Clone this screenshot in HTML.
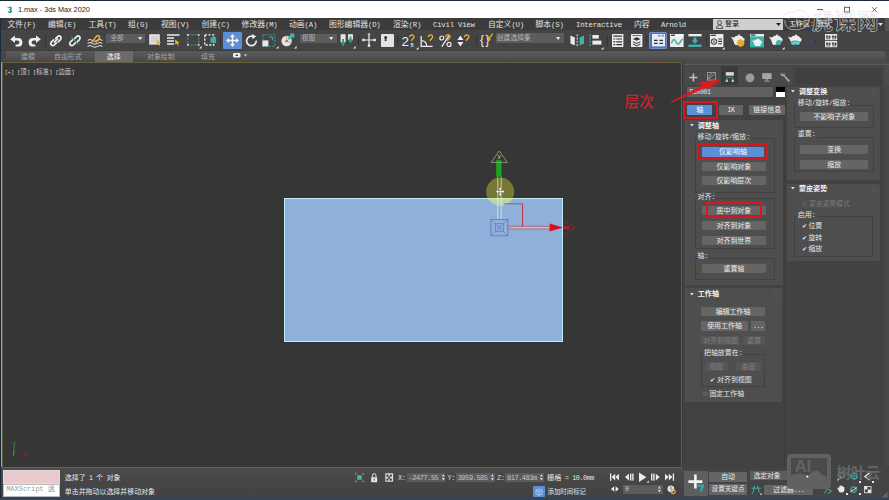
<!DOCTYPE html>
<html lang="zh-CN">
<head>
<meta charset="utf-8">
<title>1.max - 3ds Max 2020</title>
<style>
*{box-sizing:border-box;margin:0;padding:0}
html,body{width:889px;height:500px;overflow:hidden;background:#444}
body{position:relative;font-family:"Liberation Sans","Noto Sans CJK SC",sans-serif;font-size:6.95px;color:#e6e6e6}
#app{position:absolute;left:0;top:0;width:889px;height:500px;overflow:hidden;background:#444}
.t{position:absolute;white-space:nowrap}
.l{font-family:"Liberation Mono",monospace;font-size:0.94em;letter-spacing:-0.064em}
.m .l{letter-spacing:-0.032em}
.btn{position:absolute;background:#656565;color:#ececec;text-align:center;white-space:nowrap;overflow:hidden;border-radius:1px}
.btn.dis{background:#565656;color:#808080}
.btn.on{background:#5b8fd8;color:#fff}
.hd{font-weight:bold}
</style>
</head>
<body>
<div id="app">
<div style="position:absolute;left:0px;top:0px;width:889px;height:18.3px;background:#ffffff;border-top:1px solid #1a2736;"></div>
<svg style="position:absolute;left:6.6px;top:5.6px;overflow:visible;" width="5.6" height="7.6" viewBox="0 0 8 10"><path d="M1 1.2 L5 0.4 L7 2 L7 4.2 L5.6 5 L7.2 6.2 L7 8.6 L4.6 9.8 L1.4 8.6 L1.4 7 L4.4 7.6 L5 6.6 L3.2 5.4 L3.2 4.2 L5 3.4 L4.4 2.4 L1 2.8 Z" fill="#1c8f96"/><path d="M1 1.2 L5 0.4 L7 2 L5 3.4 L4.4 2.4 L1 2.8Z" fill="#39b7bd"/></svg>
<div class="t" style="left:18px;top:3.5px;line-height:12px;height:12px;font-family:'Liberation Sans',sans-serif;font-size:7.25px;color:#1e1e1e">1.max - 3ds Max 2020</div>
<svg style="position:absolute;left:817px;top:6px;overflow:visible;" width="62" height="8" viewBox="0 0 62 8"><path d="M0 3.5H6" stroke="#333" stroke-width="0.8" fill="none"/><rect x="27.6" y="1.2" width="5" height="4.8" stroke="#333" stroke-width="0.8" fill="none"/><path d="M55 1.2L60 6.2M60 1.2L55 6.2" stroke="#333" stroke-width="0.8" fill="none"/></svg>
<div style="position:absolute;left:0px;top:18.3px;width:889px;height:12.2px;background:#3b3b3b;"></div>
<div class="t m" style="left:7.5px;top:19px;font-size:7.8px;color:#e2e2e2;line-height:12px;height:12px;">文件<span class="l">(F)</span></div>
<div class="t m" style="left:48px;top:19px;font-size:7.8px;color:#e2e2e2;line-height:12px;height:12px;">编辑<span class="l">(E)</span></div>
<div class="t m" style="left:88.4px;top:19px;font-size:7.8px;color:#e2e2e2;line-height:12px;height:12px;">工具<span class="l">(T)</span></div>
<div class="t m" style="left:128px;top:19px;font-size:7.8px;color:#e2e2e2;line-height:12px;height:12px;">组<span class="l">(G)</span></div>
<div class="t m" style="left:161px;top:19px;font-size:7.8px;color:#e2e2e2;line-height:12px;height:12px;">视图<span class="l">(V)</span></div>
<div class="t m" style="left:201.5px;top:19px;font-size:7.8px;color:#e2e2e2;line-height:12px;height:12px;">创建<span class="l">(C)</span></div>
<div class="t m" style="left:241.6px;top:19px;font-size:7.8px;color:#e2e2e2;line-height:12px;height:12px;">修改器<span class="l">(M)</span></div>
<div class="t m" style="left:289px;top:19px;font-size:7.8px;color:#e2e2e2;line-height:12px;height:12px;">动画<span class="l">(A)</span></div>
<div class="t m" style="left:329px;top:19px;font-size:7.8px;color:#e2e2e2;line-height:12px;height:12px;">图形编辑器<span class="l">(D)</span></div>
<div class="t m" style="left:393px;top:19px;font-size:7.8px;color:#e2e2e2;line-height:12px;height:12px;">渲染<span class="l">(R)</span></div>
<div class="t m" style="left:433px;top:19px;font-size:7.8px;color:#e2e2e2;line-height:12px;height:12px;"><span class="l">Civil View</span></div>
<div class="t m" style="left:488px;top:19px;font-size:7.8px;color:#e2e2e2;line-height:12px;height:12px;">自定义<span class="l">(U)</span></div>
<div class="t m" style="left:535.5px;top:19px;font-size:7.8px;color:#e2e2e2;line-height:12px;height:12px;">脚本<span class="l">(S)</span></div>
<div class="t m" style="left:576px;top:19px;font-size:7.8px;color:#e2e2e2;line-height:12px;height:12px;"><span class="l">Interactive</span></div>
<div class="t m" style="left:634px;top:19px;font-size:7.8px;color:#e2e2e2;line-height:12px;height:12px;">内容</div>
<div class="t m" style="left:661px;top:19px;font-size:7.8px;color:#e2e2e2;line-height:12px;height:12px;"><span class="l">Arnold</span></div>
<div style="position:absolute;left:713px;top:18.6px;width:70px;height:11.6px;background:#cfcfcf;"></div>
<svg style="position:absolute;left:715.5px;top:20px;overflow:visible;" width="8" height="9" viewBox="0 0 8 9"><circle cx="3.6" cy="2.6" r="2" fill="none" stroke="#333" stroke-width="0.8"/><path d="M0.4 8.4 Q0.4 5 3.6 5 Q6.8 5 6.8 8.4Z" fill="none" stroke="#333" stroke-width="0.8"/></svg>
<div class="t" style="left:725px;top:18.4px;font-size:7px;color:#111;line-height:12px;height:12px;">登录</div>
<svg style="position:absolute;left:775.5px;top:23px;overflow:visible;" width="5" height="4" viewBox="0 0 5 4"><path d="M0 0H5L2.5 3Z" fill="#222"/></svg>
<div style="position:absolute;left:783px;top:18px;width:106px;height:12.5px;background:#3d3d3d;"></div>
<div style="position:absolute;left:885px;top:18px;width:4px;height:12.5px;background:#555;"></div>
<div class="t" style="left:789px;top:18.4px;font-size:7px;color:#eee;line-height:12px;height:12px;">工作区<span class="l">: </span>默认</div>
<svg style="position:absolute;left:878px;top:23px;overflow:visible;" width="5" height="4" viewBox="0 0 5 4"><path d="M0 0H5L2.5 3Z" fill="#ddd"/></svg>
<div style="position:absolute;left:0px;top:30.5px;width:889px;height:19.5px;background:#444444;"></div>
<svg style="position:absolute;left:9.6px;top:34.6px;overflow:visible;" width="13" height="12" viewBox="0 0 13 12"><path d="M5 0.4L0.2 4.2L5 8V5.6H7.4Q9.4 5.6 9.4 7.6Q9.4 9.4 7.4 9.4H5.6V11.6H7.8Q12.4 11.6 12.4 7.4Q12.4 3 7.8 3H5Z" fill="#eeeeee"/></svg>
<svg style="position:absolute;left:27.6px;top:34.6px;overflow:visible;" width="13" height="12" viewBox="0 0 13 12"><path d="M8 0.4L12.8 4.2L8 8V5.6H5.6Q3.6 5.6 3.6 7.6Q3.6 9.4 5.6 9.4H7.4V11.6H5.2Q0.6 11.6 0.6 7.4Q0.6 3 5.2 3H8Z" fill="#eeeeee"/></svg>
<div style="position:absolute;left:45px;top:35px;width:0.8px;height:11px;background:#333333;"></div>
<svg style="position:absolute;left:48.4px;top:32.6px;overflow:visible;" width="16" height="15" viewBox="0 0 16 15"><g fill="none" stroke="#eeeeee" stroke-width="1.7" stroke-linecap="round"><path d="M5.6 6.8L3.4 9Q2 10.6 3.4 12Q4.8 13.2 6.4 11.8L8.4 9.8"/><path d="M7.6 5.6L9.6 3.6Q11.2 2.2 12.6 3.6Q13.8 5 12.4 6.6L10.2 8.8"/><path d="M6.4 9.2L9.6 6"/></g></svg>
<svg style="position:absolute;left:66.8px;top:32.6px;overflow:visible;" width="16" height="15" viewBox="0 0 16 15"><g fill="none" stroke="#eeeeee" stroke-width="1.7" stroke-linecap="round"><path d="M5.6 6.8L3.4 9Q2 10.6 3.4 12Q4.8 13.2 6.4 11.8L8.4 9.8"/><path d="M7.6 5.6L9.6 3.6Q11.2 2.2 12.6 3.6Q13.8 5 12.4 6.6L10.2 8.8"/></g><path d="M4.4 4L11.6 11.4" stroke="#3fb3ab" stroke-width="1" /></svg>
<svg style="position:absolute;left:86.6px;top:33.6px;overflow:visible;" width="17" height="14" viewBox="0 0 17 14"><path d="M0.6 6.4Q3 4.6 5.4 6.4T10.4 6.4T15.4 6.4M0.6 9.4Q3 7.6 5.4 9.4T10.4 9.4T15.4 9.4M0.6 12.4Q3 10.6 5.4 12.4T10.4 12.4T15.4 12.4" stroke="#eeeeee" stroke-width="1" fill="none"/><path d="M4.6 8.6L8.6 3.4Q10.2 0.8 12 1.8Q13.4 3 11.8 5L8.6 8.4" stroke="#e8b030" stroke-width="1.5" fill="none"/></svg>
<div style="position:absolute;left:105.6px;top:33.6px;width:39.6px;height:9.4px;background:#5c5c5c;"></div>
<div class="t" style="left:110.4px;top:32.4px;font-size:6.6px;color:#b4b4b4;line-height:12px;height:12px;">全部</div>
<svg style="position:absolute;left:137.6px;top:36.8px;overflow:visible;" width="4.4" height="3.4" viewBox="0 0 4.4 3.4"><path d="M0 0H4.4L2.2 3Z" fill="#e0e0e0"/></svg>
<svg style="position:absolute;left:149px;top:34px;overflow:visible;" width="14" height="12" viewBox="0 0 14 12"><rect x="0.2" y="0.2" width="10.6" height="10.4" fill="#e4e4e4"/><rect x="2" y="2" width="7" height="6.8" fill="#d8d0d4"/><g transform="translate(7.4,5.4)"><path d="M0 0L4.6 3.4L2.8 3.8L3.8 6L2.8 6.4L1.8 4.2L0.4 5.4Z" fill="#e8b030"/></g></svg>
<svg style="position:absolute;left:167px;top:34px;overflow:visible;" width="14" height="12" viewBox="0 0 14 12"><path d="M0 1H12.6M0 4H7M0 7H7M0 10H7" stroke="#ececec" stroke-width="1.6"/><g transform="translate(8,5.4)"><path d="M0 0L4.6 3.4L2.8 3.8L3.8 6L2.8 6.4L1.8 4.2L0.4 5.4Z" fill="#e8b030"/></g></svg>
<svg style="position:absolute;left:186.6px;top:34px;overflow:visible;" width="13" height="12" viewBox="0 0 13 12"><rect x="0.8" y="0.8" width="11" height="10.2" fill="none" stroke="#4f9c94" stroke-width="1.1" stroke-dasharray="2 1.4"/><path d="M0.2 0.8H2M0.8 0.2V2M10.6 0.8H12.4M11.8 0.2V2M0.2 11H2M0.8 9.8V11.6M10.6 11H12.4M11.8 9.8V11.6" stroke="#cfe6e2" stroke-width="1"/></svg>
<svg style="position:absolute;left:198.6px;top:46.4px;overflow:visible;" width="2.6" height="2.6" viewBox="0 0 2.6 2.6"><path d="M2.6 0V2.6H0Z" fill="#e6e6e6"/></svg>
<svg style="position:absolute;left:203.8px;top:34px;overflow:visible;" width="12.6" height="12" viewBox="0 0 12.6 12"><rect x="0.8" y="0.8" width="9" height="10.2" fill="none" stroke="#ececec" stroke-width="1.3" stroke-dasharray="2.2 1.4"/><rect x="6.6" y="3.2" width="5.4" height="5.6" fill="#3fb3ab"/></svg>
<div style="position:absolute;left:219.6px;top:35px;width:0.8px;height:11px;background:#333333;"></div>
<div style="position:absolute;left:223.4px;top:32.2px;width:18.2px;height:17px;background:#5b8fd8;border-radius:1px;"></div>
<svg style="position:absolute;left:226px;top:34.2px;overflow:visible;" width="13" height="13" viewBox="0 0 13 13"><path d="M6.5 0L9 3H7.3V5.7H10V4L13 6.5L10 9V7.3H7.3V10H9L6.5 13L4 10H5.7V7.3H3V9L0 6.5L3 4V5.7H5.7V3H4Z" fill="#f4f4f4"/></svg>
<svg style="position:absolute;left:244.8px;top:33.6px;overflow:visible;" width="13" height="13" viewBox="0 0 13 13"><path d="M8.6 2.6A4.8 4.8 0 1 0 11.2 6.6" stroke="#eeeeee" stroke-width="1.7" fill="none"/><path d="M7 0L11.2 2.4L7.6 5.2Z" fill="#eeeeee"/></svg>
<svg style="position:absolute;left:262.4px;top:33.8px;overflow:visible;" width="14" height="13" viewBox="0 0 14 13"><rect x="0.8" y="0.8" width="12" height="11.4" fill="none" stroke="#3a968c" stroke-width="1.1" stroke-dasharray="2.2 1.2"/><rect x="0.4" y="6.4" width="6" height="6" fill="#e8e8e8"/><path d="M7 3H10.4V6.4" stroke="#3fb3ab" stroke-width="1" fill="none"/></svg>
<svg style="position:absolute;left:275.6px;top:46.4px;overflow:visible;" width="2.6" height="2.6" viewBox="0 0 2.6 2.6"><path d="M2.6 0V2.6H0Z" fill="#e6e6e6"/></svg>
<svg style="position:absolute;left:281px;top:33.4px;overflow:visible;" width="15" height="14" viewBox="0 0 15 14"><circle cx="5.6" cy="8" r="5.2" fill="#e4e4e4"/><path d="M5.6 8L5.6 3M5.6 8L10 10" stroke="#999" stroke-width="0.7"/><circle cx="5.6" cy="8" r="1.3" fill="#d06020"/><path d="M7.4 6.2L10.6 2.2" stroke="#3fb3ab" stroke-width="2.2"/><circle cx="11.2" cy="2.6" r="2.4" fill="#3fb3ab"/></svg>
<svg style="position:absolute;left:294.4px;top:46.4px;overflow:visible;" width="2.6" height="2.6" viewBox="0 0 2.6 2.6"><path d="M2.6 0V2.6H0Z" fill="#e6e6e6"/></svg>
<div style="position:absolute;left:300px;top:33.6px;width:36.6px;height:9.4px;background:#5c5c5c;"></div>
<div class="t" style="left:301.8px;top:32.4px;font-size:6.6px;color:#b4b4b4;line-height:12px;height:12px;">视图</div>
<svg style="position:absolute;left:329px;top:36.8px;overflow:visible;" width="4.4" height="3.4" viewBox="0 0 4.4 3.4"><path d="M0 0H4.4L2.2 3Z" fill="#e0e0e0"/></svg>
<svg style="position:absolute;left:339.6px;top:34px;overflow:visible;" width="15" height="13" viewBox="0 0 15 13"><rect x="0.6" y="0.2" width="5" height="8" fill="#e4e4e4"/><rect x="8" y="0.2" width="5" height="6" fill="#e4e4e4"/><path d="M3.1 12.6L0.4 8.2H2.2V5H4V8.2H5.8Z" fill="#2f9a74"/><path d="M10.5 9.6L7.8 5.4H9.6V2.4H11.4V5.4H13.2Z" fill="#2f9a74"/></svg>
<svg style="position:absolute;left:353px;top:46.4px;overflow:visible;" width="2.6" height="2.6" viewBox="0 0 2.6 2.6"><path d="M2.6 0V2.6H0Z" fill="#e6e6e6"/></svg>
<div style="position:absolute;left:357.6px;top:35px;width:0.8px;height:11px;background:#333333;"></div>
<svg style="position:absolute;left:361.8px;top:33.4px;overflow:visible;" width="14" height="14" viewBox="0 0 14 14"><path d="M7 1.6V12.4M1.6 7H12.4" stroke="#eeeeee" stroke-width="1.2"/><rect x="5.8" y="0.2" width="2.4" height="2.4" fill="#8fd0ca"/><rect x="5.8" y="11.4" width="2.4" height="2.4" fill="#eeeeee"/><rect x="0.2" y="5.8" width="2.4" height="2.4" fill="#eeeeee"/><rect x="11.4" y="5.8" width="2.4" height="2.4" fill="#eeeeee"/></svg>
<svg style="position:absolute;left:380.6px;top:34.2px;overflow:visible;" width="13" height="13" viewBox="0 0 13 13"><rect x="0" y="0" width="13" height="13" rx="0.8" fill="#e2e2e2"/><circle cx="4.6" cy="3.6" r="1.5" fill="#333"/><path d="M4 4.4H5.2L5.6 7H3.6Z" fill="#333"/></svg>
<div style="position:absolute;left:397.2px;top:35px;width:0.8px;height:11px;background:#333333;"></div>
<svg style="position:absolute;left:401.8px;top:33.6px;overflow:visible;" width="15" height="14" viewBox="0 0 15 14"><text x="-0.4" y="12.4" font-family="Liberation Sans,sans-serif" font-size="13.4" fill="#eeeeee">2</text><text x="8.4" y="13" font-family="Liberation Sans,sans-serif" font-size="5.6" font-weight="bold" fill="#eeeeee">5</text><path d="M7.6 3.2Q8 0.8 10.2 0.8Q12.6 1.2 11.8 3.8L9.2 6.8" stroke="#e8b030" stroke-width="1.3" fill="none"/></svg>
<svg style="position:absolute;left:415.6px;top:46.6px;overflow:visible;" width="2.6" height="2.6" viewBox="0 0 2.6 2.6"><path d="M2.6 0V2.6H0Z" fill="#e6e6e6"/></svg>
<svg style="position:absolute;left:420.4px;top:33.6px;overflow:visible;" width="15" height="14" viewBox="0 0 15 14"><path d="M1.2 2V12.4H12.6" stroke="#eeeeee" stroke-width="1.3" fill="none"/><path d="M1.2 6.6Q6.4 6.6 6.8 12.4" stroke="#eeeeee" stroke-width="1.1" fill="none"/><path d="M8.2 3.2Q8.6 0.8 10.8 0.8Q13.2 1.2 12.4 3.8L9.8 6.8" stroke="#e8b030" stroke-width="1.3" fill="none"/></svg>
<svg style="position:absolute;left:439.4px;top:33.6px;overflow:visible;" width="14" height="14" viewBox="0 0 14 14"><circle cx="2.8" cy="4" r="2" fill="none" stroke="#eeeeee" stroke-width="1.2"/><circle cx="10" cy="10.4" r="2" fill="none" stroke="#eeeeee" stroke-width="1.2"/><path d="M10 1.6L2.8 12.6" stroke="#eeeeee" stroke-width="1.2"/><path d="M6.6 3Q7 0.6 9.2 0.6Q11.6 1 10.8 3.6L8.2 6.6" stroke="#e8b030" stroke-width="1.3" fill="none"/></svg>
<svg style="position:absolute;left:457.4px;top:33.6px;overflow:visible;" width="14" height="14" viewBox="0 0 14 14"><path d="M0.4 6L3.4 1.6L6.4 6ZM0.4 8L3.4 12.4L6.4 8Z" fill="#eeeeee"/><path d="M7.4 3.2Q7.8 0.8 10 0.8Q12.4 1.2 11.6 3.8L9 6.8" stroke="#e8b030" stroke-width="1.3" fill="none"/></svg>
<div style="position:absolute;left:476px;top:35px;width:0.8px;height:11px;background:#333333;"></div>
<svg style="position:absolute;left:479.6px;top:33.2px;overflow:visible;" width="14" height="14" viewBox="0 0 14 14"><text x="0" y="11.4" font-family="Liberation Sans,sans-serif" font-size="12" fill="#eeeeee">{</text><text x="5.4" y="11.4" font-family="Liberation Sans,sans-serif" font-size="12" fill="#eeeeee">}</text><path d="M6.2 1.6L10.4 6.8M12.6 0.6L7.8 7.6" stroke="#e8b030" stroke-width="1.3"/></svg>
<div style="position:absolute;left:495.6px;top:33.2px;width:68.8px;height:9.4px;background:#5c5c5c;"></div>
<div class="t" style="left:496.8px;top:32px;font-size:6.8px;color:#b4b4b4;line-height:12px;height:12px;">创建选择集</div>
<svg style="position:absolute;left:556.2px;top:36.6px;overflow:visible;" width="4.4" height="3.4" viewBox="0 0 4.4 3.4"><path d="M0 0H4.4L2.2 3Z" fill="#e0e0e0"/></svg>
<svg style="position:absolute;left:570.4px;top:34px;overflow:visible;" width="15" height="13" viewBox="0 0 15 13"><path d="M0.4 1.4L4.8 3.4V11.4L0.4 9.4Z" fill="#e8e8e8"/><path d="M14 1.4L9.6 3.4V11.4L14 9.4Z" fill="#3fb3ab"/><path d="M7.2 0.4V12.6" stroke="#e8e8e8" stroke-width="1" stroke-dasharray="2 1.2"/></svg>
<svg style="position:absolute;left:588.6px;top:34px;overflow:visible;" width="13" height="13" viewBox="0 0 13 13"><path d="M1 0.4V12.6" stroke="#3fb3ab" stroke-width="1" stroke-dasharray="2 1.2"/><rect x="3.4" y="1" width="6.4" height="3.6" fill="#ececec"/><rect x="3.4" y="6.6" width="9" height="4" fill="#ececec"/></svg>
<svg style="position:absolute;left:601.4px;top:46.6px;overflow:visible;" width="2.6" height="2.6" viewBox="0 0 2.6 2.6"><path d="M2.6 0V2.6H0Z" fill="#e6e6e6"/></svg>
<div style="position:absolute;left:606.8px;top:35px;width:0.8px;height:11px;background:#333333;"></div>
<svg style="position:absolute;left:612px;top:34.2px;overflow:visible;" width="11.4" height="13" viewBox="0 0 11.4 13"><rect x="0" y="0" width="11.4" height="13" rx="0.6" fill="#ececec"/><path d="M1.4 2.2H10M1.4 5H10M1.4 7.8H10M1.4 10.6H10" stroke="#333" stroke-width="1.2"/><path d="M3.8 3V12" stroke="#ececec" stroke-width="1"/></svg>
<svg style="position:absolute;left:630.6px;top:34.2px;overflow:visible;" width="11.4" height="13" viewBox="0 0 11.4 13"><rect x="0" y="0" width="11.4" height="13" rx="0.6" fill="#ececec"/><path d="M1.4 1.6H10" stroke="#666" stroke-width="1"/><path d="M5.7 3.2L9.6 5L5.7 6.8L1.8 5ZM2 7.2L5.7 9L9.4 7.2V8.2L5.7 10L2 8.2ZM2 9.6L5.7 11.4L9.4 9.6V10.6L5.7 12.4L2 10.6Z" fill="#333"/></svg>
<div style="position:absolute;left:645.6px;top:35px;width:0.8px;height:11px;background:#333333;"></div>
<div style="position:absolute;left:648.6px;top:32.2px;width:18.8px;height:17px;background:#4f74b8;border:1px solid #6e8fca;border-radius:1.5px;"></div>
<svg style="position:absolute;left:651.8px;top:34.4px;overflow:visible;" width="13" height="12.4" viewBox="0 0 13 12.4"><rect x="0" y="0" width="13" height="12.4" fill="#e6ecf6"/><rect x="6" y="0.8" width="2.6" height="1.8" fill="#8a9cc0"/><rect x="9.4" y="0.8" width="2.6" height="1.8" fill="#8a9cc0"/><path d="M2 6.4H5.6M7.4 6.4H11M2 9.4H5.6M7.4 9.4H11" stroke="#333" stroke-width="1.3"/></svg>
<svg style="position:absolute;left:670px;top:34.2px;overflow:visible;" width="13.6" height="13" viewBox="0 0 13.6 13"><rect x="0" y="0" width="13.6" height="13" fill="#ececec"/><rect x="0" y="0" width="13.6" height="2.6" fill="#f8f8f8"/><rect x="1" y="0.6" width="4" height="1.4" fill="#444"/><path d="M1.4 9.4Q3.4 3 5.6 7.4T9.6 9T12.4 5" stroke="#3fb3ab" stroke-width="1.5" fill="none"/></svg>
<svg style="position:absolute;left:688px;top:34px;overflow:visible;" width="14" height="13.4" viewBox="0 0 14 13.4"><rect x="0.4" y="0" width="13.2" height="2.4" fill="#ececec"/><path d="M5.6 3.4H8.4V6.4H10.4L7 9.8L3.6 6.4H5.6Z" fill="#3fb3ab"/><rect x="0.4" y="10.6" width="13.2" height="2.4" fill="#3fb3ab"/></svg>
<div style="position:absolute;left:706px;top:35px;width:0.8px;height:11px;background:#333333;"></div>
<svg style="position:absolute;left:710px;top:34.2px;overflow:visible;" width="13.4" height="13" viewBox="0 0 13.4 13"><rect x="0" y="0" width="13.4" height="13" fill="#ececec"/><rect x="0.8" y="0.6" width="5" height="1.4" fill="#444"/><circle cx="4" cy="7.6" r="2.8" fill="none" stroke="#333" stroke-width="1"/><path d="M2 5.6L6 9.6M6 5.6L2 9.6" stroke="#333" stroke-width="0.7"/><path d="M8.2 5H12M8.2 7.4H12M8.2 9.8H12" stroke="#333" stroke-width="1.1"/></svg>
<svg style="position:absolute;left:722.4px;top:46.6px;overflow:visible;" width="2.6" height="2.6" viewBox="0 0 2.6 2.6"><path d="M2.6 0V2.6H0Z" fill="#e6e6e6"/></svg>
<svg style="position:absolute;left:731.4px;top:33.8px;overflow:visible;" width="15" height="14" viewBox="0 0 15 14"><path d="M0 2.8L3 3.6Q4.6 1.6 7.2 1.6L7.2 0.6H8.8V1.6Q11.2 1.8 12.4 4Q14 4 13.6 6Q13.2 7.6 12.2 7.8Q11.6 10.4 10.4 11H4.6Q3 10 2.6 7.2Q1.4 5 0 2.8Z" fill="#ececec"/><circle cx="9.6" cy="9" r="3.4" fill="#e8b030"/><circle cx="9.6" cy="9" r="1.3" fill="#7a5a10"/><path d="M9.6 4.8V13.2M5.4 9H13.8M6.6 6L12.6 12M12.6 6L6.6 12" stroke="#e8b030" stroke-width="1"/></svg>
<svg style="position:absolute;left:750px;top:34px;overflow:visible;" width="14" height="13.4" viewBox="0 0 14 13.4"><rect x="0" y="0" width="14" height="13.4" fill="#3fb3ab"/><rect x="0" y="0" width="14" height="2.4" fill="#ececec"/><rect x="0.8" y="0.5" width="4.6" height="1.3" fill="#444"/><g transform="translate(2.2,4.2) scale(0.72)"><path d="M0 2.8L3 3.6Q4.6 1.6 7.2 1.6L7.2 0.6H8.8V1.6Q11.2 1.8 12.4 4Q14 4 13.6 6Q13.2 7.6 12.2 7.8Q11.6 10.4 10.4 11H4.6Q3 10 2.6 7.2Q1.4 5 0 2.8Z" fill="#f0f0f0"/></g></svg>
<svg style="position:absolute;left:768.6px;top:33.8px;overflow:visible;" width="15" height="14" viewBox="0 0 15 14"><path d="M0 2.8L3 3.6Q4.6 1.6 7.2 1.6L7.2 0.6H8.8V1.6Q11.2 1.8 12.4 4Q14 4 13.6 6Q13.2 7.6 12.2 7.8Q11.6 10.4 10.4 11H4.6Q3 10 2.6 7.2Q1.4 5 0 2.8Z" fill="#ececec"/><path d="M8 6.4Q10.6 5.4 12.8 7.2Q12 10.6 10.4 11H6.4Q6.6 8 8 6.4Z" fill="#3fb3ab"/></svg>
<svg style="position:absolute;left:782px;top:46.6px;overflow:visible;" width="2.6" height="2.6" viewBox="0 0 2.6 2.6"><path d="M2.6 0V2.6H0Z" fill="#e6e6e6"/></svg>
<svg style="position:absolute;left:787.6px;top:33.8px;overflow:visible;" width="15" height="14" viewBox="0 0 15 14"><path d="M0 2.8L3 3.6Q4.6 1.6 7.2 1.6L7.2 0.6H8.8V1.6Q11.2 1.8 12.4 4Q14 4 13.6 6Q13.2 7.6 12.2 7.8Q11.6 10.4 10.4 11H4.6Q3 10 2.6 7.2Q1.4 5 0 2.8Z" fill="#ececec"/><path d="M2.8 7.6Q7 5.4 12.2 7.8Q11.6 10.4 10.4 11H4.6Q3.2 10 2.8 7.6Z" fill="#3fb3ab"/><path d="M4.4 9.4Q7.4 7.6 10.8 9.4" stroke="#d8f0ee" stroke-width="0.8" fill="none"/></svg>
<svg style="position:absolute;left:808.8px;top:35px;overflow:visible;" width="9" height="11" viewBox="0 0 9 11"><path d="M0.6 10.6Q0.4 3.6 8.4 0.4Q3.6 4.4 3.4 10.4Z" fill="#3c4868"/><path d="M4.6 9.6Q4.8 5.4 8.4 2.8Q6.4 6 6.4 9.4Z" fill="#343c58"/></svg>
<svg style="position:absolute;left:824.6px;top:34.4px;overflow:visible;" width="6.2" height="6.2" viewBox="0 0 6.2 6.2"><rect x="0" y="0" width="6.2" height="6.2" fill="#e6e6e6"/><rect x="1" y="1.6" width="2" height="2" fill="#444"/><rect x="3.6" y="1.6" width="1.8" height="2.6" fill="#444"/><rect x="1" y="4.4" width="4" height="0.9" fill="#666"/></svg>
<svg style="position:absolute;left:824.6px;top:41.2px;overflow:visible;" width="6.2" height="6.2" viewBox="0 0 6.2 6.2"><rect x="0" y="0" width="6.2" height="6.2" fill="#e6e6e6"/><rect x="1" y="1.6" width="2" height="2" fill="#444"/><rect x="3.6" y="1.6" width="1.8" height="2.6" fill="#444"/><rect x="1" y="4.4" width="4" height="0.9" fill="#666"/></svg>
<svg style="position:absolute;left:831.4px;top:34.4px;overflow:visible;" width="6.2" height="6.2" viewBox="0 0 6.2 6.2"><rect x="0" y="0" width="6.2" height="6.2" fill="#e6e6e6"/><rect x="1" y="1.6" width="2" height="2" fill="#444"/><rect x="3.6" y="1.6" width="1.8" height="2.6" fill="#444"/><rect x="1" y="4.4" width="4" height="0.9" fill="#666"/></svg>
<svg style="position:absolute;left:831.4px;top:41.2px;overflow:visible;" width="6.2" height="6.2" viewBox="0 0 6.2 6.2"><rect x="0" y="0" width="6.2" height="6.2" fill="#e6e6e6"/><rect x="1" y="1.6" width="2" height="2" fill="#444"/><rect x="3.6" y="1.6" width="1.8" height="2.6" fill="#444"/><rect x="1" y="4.4" width="4" height="0.9" fill="#666"/></svg>
<div style="position:absolute;left:0px;top:49.6px;width:889px;height:13px;background:#474747;border-top:1px solid #3e3e3e;"></div>
<div style="position:absolute;left:6px;top:50.6px;width:879px;height:11.6px;background:linear-gradient(#5a5a5a,#545454 45%,#474747);"></div>
<div style="position:absolute;left:95px;top:51px;width:38px;height:11px;background:#6a6a6a;"></div>
<div class="t" style="left:21px;top:50.6px;font-size:6.9px;color:#a4a4a4;line-height:12px;height:12px;">建模</div>
<div class="t" style="left:54px;top:50.6px;font-size:6.9px;color:#a4a4a4;line-height:12px;height:12px;">自由形式</div>
<div class="t" style="left:106.8px;top:50.6px;font-size:6.9px;color:#f4f4f4;line-height:12px;height:12px;">选择</div>
<div class="t" style="left:147px;top:50.6px;font-size:6.9px;color:#a4a4a4;line-height:12px;height:12px;">对象绘制</div>
<div class="t" style="left:201px;top:50.6px;font-size:6.9px;color:#a4a4a4;line-height:12px;height:12px;">填充</div>
<svg style="position:absolute;left:232.5px;top:53.2px;overflow:visible;" width="16" height="5" viewBox="0 0 16 5"><rect x="0" y="0" width="7.5" height="4.6" rx="1.4" fill="#f0f0f0"/><rect x="2.6" y="1.6" width="2.4" height="1.4" fill="#444"/><path d="M11 1.4H14L12.5 3.4Z" fill="#ddd"/></svg>
<div style="position:absolute;left:0px;top:62.5px;width:889px;height:3px;background:#3a3a3a;"></div>
<div style="position:absolute;left:0px;top:62.5px;width:684px;height:405px;background:#383838;"></div>
<div style="position:absolute;left:2px;top:62.2px;width:680px;height:405.4px;background:#363636;border:1px solid #67603f;border-right-width:1.4px;border-top-width:1.3px;border-bottom:1.3px solid #6a6350;"></div>
<div class="t" style="left:4.4px;top:66.3px;font-size:6.3px;color:#d0d0d0;line-height:12px;height:12px;letter-spacing:0.1px;"><span class="l">[+] [</span>顶<span class="l">] [</span>标准<span class="l">] [</span>边面<span class="l">]</span></div>
<div style="position:absolute;left:283.6px;top:197.6px;width:279.4px;height:144px;background:#8fb0d8;border:1.3px solid #c0ecf6;box-shadow:0 0 0 0.9px #25393f;"></div>
<svg style="position:absolute;left:8px;top:438px;overflow:visible;" width="24" height="22" viewBox="0 0 24 22"><g opacity="0.6"><path d="M5.6 18L6.6 3" stroke="#3c9a3c" stroke-width="1.6" stroke-opacity="0.85"/><path d="M5.6 13V18" stroke="#8aa0c8" stroke-width="0.9"/><path d="M5.6 18.5V20" stroke="#3048a0" stroke-width="1.4"/><ellipse cx="17.4" cy="16.4" rx="2.6" ry="2" fill="#b02028" fill-opacity="0.8"/><path d="M6 17.6L15 16.6" stroke="#5a3030" stroke-width="0.8"/></g></svg>
<svg style="position:absolute;left:0px;top:0px;overflow:visible;" width="889" height="500" viewBox="0 0 889 500"><defs><linearGradient id="yg" gradientUnits="userSpaceOnUse" x1="0" y1="198" x2="0" y2="206"><stop offset="0" stop-color="#e0f07c" stop-opacity="0.72"/><stop offset="1" stop-color="#d8ec98" stop-opacity="0.4"/></linearGradient></defs><clipPath id="cu"><rect x="480" y="170" width="40" height="28.2"/></clipPath><clipPath id="cl"><rect x="480" y="198.2" width="40" height="12"/></clipPath><ellipse cx="500.2" cy="191.8" rx="14" ry="14.2" fill="#b4b43a" fill-opacity="0.52" clip-path="url(#cu)"/><ellipse cx="500.2" cy="191.8" rx="14" ry="14.2" fill="url(#yg)" clip-path="url(#cl)"/><path d="M504 203.8H522.6" stroke="#5a5f68" stroke-width="0.8" fill="none"/><path d="M522.6 203.8V227" stroke="#c8202a" stroke-width="0.9" fill="none"/><path d="M497.8 176V219.4M501.2 176V219.4" stroke="#e8f4d8" stroke-width="0.7" fill="none"/><rect x="496" y="160" width="5.8" height="17" fill="#1aa420" stroke="#2a4a2a" stroke-width="0.4"/><path d="M499.2 151 L507.4 162.4 H491.2 Z" fill="none" stroke="#93ab84" stroke-width="0.8"/><text x="497.8" y="158.2" font-family="Liberation Sans,sans-serif" font-size="6" fill="#ecec9c">y</text><path d="M507.6 226.2H551M507.6 229H551" stroke="#cc4a54" stroke-width="0.7" fill="none"/><path d="M509 227.6H550" stroke="#e8c4cc" stroke-width="1.4" stroke-opacity="0.6"/><path d="M507.6 227.6L513 226.2V229Z" fill="#c8a0b0"/><path d="M549.6 223.6 L563 227.6 L549.6 231.4Z" fill="#d8101a"/><path d="M563 220.4 L575.6 227.6 L563 234.6" fill="none" stroke="#8a2a2a" stroke-width="0.8"/><path d="M563 227.6H569" stroke="#d8101a" stroke-width="2.4"/><rect x="491" y="219.4" width="16.8" height="16.4" fill="none" stroke="#4862c4" stroke-opacity="0.85" stroke-width="0.7"/><rect x="495.4" y="223.6" width="8" height="8" fill="none" stroke="#4862c4" stroke-opacity="0.8" stroke-width="0.6"/><path d="M491 219.4L507.8 235.8M507.8 219.4L491 235.8" stroke="#4862c4" stroke-opacity="0.7" stroke-width="0.5"/><circle cx="499.4" cy="227.6" r="1.6" fill="none" stroke="#4862c4" stroke-opacity="0.7" stroke-width="0.5"/><g transform="translate(500.2,191.6)" fill="#fff" stroke="#555" stroke-width="0.3"><path d="M0 -4.4L1.8 -2.2H0.6V-0.6H2.2V-1.8L4.4 0L2.2 1.8V0.6H0.6V2.2H1.8L0 4.4L-1.8 2.2H-0.6V0.6H-2.2V1.8L-4.4 0L-2.2 -1.8V-0.6H-0.6V-2.2H-1.8Z"/></g></svg>
<div style="position:absolute;left:683.2px;top:64px;width:205.8px;height:404px;background:#424242;"></div>
<div style="position:absolute;left:683.5px;top:62px;width:205.5px;height:2.2px;background:#4c4c4c;"></div>
<div style="position:absolute;left:683.5px;top:64.2px;width:205.5px;height:0.9px;background:#5a5a5a;"></div>
<div style="position:absolute;left:683.5px;top:65.1px;width:205.5px;height:21px;background:#454545;"></div>
<div style="position:absolute;left:794.6px;top:67.6px;width:87.2px;height:17.2px;background:#404040;"></div>
<div style="position:absolute;left:884.4px;top:65.1px;width:4.6px;height:21px;background:#4c4c4c;"></div>
<div style="position:absolute;left:684.4px;top:65.8px;width:108px;height:19.6px;background:#494949;"></div>
<div style="position:absolute;left:721.2px;top:65.8px;width:17px;height:19.6px;background:#3b3b3b;"></div>
<svg style="position:absolute;left:688.6px;top:73px;overflow:visible;" width="9" height="9" viewBox="0 0 9 9"><path d="M4.4 0.4V8.4M0.4 4.4H8.4" stroke="#c2c2c2" stroke-width="1.5" fill="none"/></svg>
<svg style="position:absolute;left:707px;top:72.4px;overflow:visible;" width="9" height="8.6" viewBox="0 0 9 8.6"><rect x="0.5" y="0.5" width="8" height="7.6" fill="none" stroke="#9c9c9c" stroke-width="0.9"/><path d="M1.4 7.4 L7.6 1.2 M2 7V4.6Q2.4 2.2 5 1.6" stroke="#9c9c9c" stroke-width="0.9" fill="none"/></svg>
<svg style="position:absolute;left:725px;top:71.6px;overflow:visible;" width="9.6" height="10.4" viewBox="0 0 9.6 10.4"><rect x="0.8" y="0.2" width="8" height="3.4" fill="#e8e8e8"/><path d="M1 1.9H8.6" stroke="#9ab" stroke-width="0.5"/><path d="M4.8 3.6V5.6M1.8 7.6V5.6H7.8V7.6" stroke="#3aa6a0" stroke-width="0.9" fill="none"/><rect x="0.6" y="7.6" width="2.4" height="2.4" fill="#8fd0c8"/><rect x="6.6" y="7.6" width="2.4" height="2.4" fill="#8fd0c8"/></svg>
<svg style="position:absolute;left:744.6px;top:72.6px;overflow:visible;" width="9.6" height="9.6" viewBox="0 0 9.6 9.6"><circle cx="5" cy="4.8" r="4.4" fill="#9a9a9a"/><path d="M1.6 1.6 A4.6 4.6 0 0 0 1.8 8.2" stroke="#3c6a66" stroke-width="1" fill="none"/></svg>
<svg style="position:absolute;left:762.2px;top:72.8px;overflow:visible;" width="10" height="9" viewBox="0 0 10 9"><rect x="0.2" y="0.2" width="9.4" height="5.8" fill="#a6a6a6"/><rect x="3.8" y="6" width="2.2" height="1.6" fill="#8c8c8c"/><rect x="2.4" y="7.6" width="5" height="1" fill="#a6a6a6"/></svg>
<svg style="position:absolute;left:779.6px;top:72.2px;overflow:visible;" width="10" height="10.6" viewBox="0 0 10 10.6"><path d="M1.2 0.6 Q0 2.2 1.2 3.6 Q2.4 4.6 3.8 4.2 L8 9.6 Q9 10.2 9.6 9.4 Q10 8.6 9.2 8 L4.6 3.2 Q5 1.6 3.8 0.6 L3.6 2.4 L2.2 2.6Z" fill="#ababab"/></svg>
<div style="position:absolute;left:686.6px;top:86.8px;width:86.2px;height:10.4px;background:#606060;"></div>
<div class="t" style="left:689.6px;top:86.2px;font-size:6.9px;color:#e4e4e4;line-height:12px;height:12px;"><span class="l">Box001</span></div>
<div style="position:absolute;left:776.4px;top:86.8px;width:8.8px;height:10.4px;background:#fff;"></div>
<div style="position:absolute;left:776.4px;top:86.8px;width:8.8px;height:5px;background:#000;"></div>
<div class="btn on" style="left:687px;top:104.6px;width:25.4px;height:10.2px;line-height:10.2px;font-size:6.95px">轴</div>
<div class="btn " style="left:719.4px;top:104.6px;width:23.4px;height:10.2px;line-height:10.2px;font-size:6.95px"><span class="l">IK</span></div>
<div class="btn " style="left:749.3px;top:104.6px;width:35.8px;height:10.2px;line-height:10.2px;font-size:6.95px">链接信息</div>
<div style="position:absolute;left:685.4px;top:120px;width:97.4px;height:164.6px;background:#4e4e4e;"></div>
<svg style="position:absolute;left:690px;top:124.2px;overflow:visible;" width="4" height="3" viewBox="0 0 4 3"><path d="M0 0H3.8L1.9 2.6Z" fill="#dcdcdc"/></svg>
<div class="t" style="left:697.8px;top:119.8px;font-size:7.05px;color:#f2f2f2;line-height:12px;height:12px;font-weight:bold;">调整轴</div>
<svg style="position:absolute;left:774.4px;top:124px;overflow:visible;" width="5" height="5" viewBox="0 0 5 5"><path d="M0.5 0.5H4.5M0.5 2.5H4.5M0.5 4.5H4.5" stroke="#5c5c5c" stroke-width="0.9" stroke-dasharray="1 0.8"/></svg>
<div style="position:absolute;left:694.6px;top:138.4px;width:80px;height:54.6px;background:transparent;border:1px solid #414141;"></div>
<div class="t" style="left:697px;top:131px;font-size:6.95px;color:#e4e4e4;line-height:12px;height:12px;background:#4e4e4e;padding:0 1.4px 0 0.6px;">移动<span class="l">/</span>旋转<span class="l">/</span>缩放<span class="l">:</span></div>
<div class="btn on" style="left:701.8px;top:147.2px;width:62.4px;height:9.6px;line-height:9.6px;font-size:6.95px">仅影响轴</div>
<div class="btn " style="left:701.8px;top:161.6px;width:64.2px;height:9.4px;line-height:9.4px;font-size:6.95px">仅影响对象</div>
<div class="btn " style="left:701.8px;top:176px;width:64.2px;height:9.4px;line-height:9.4px;font-size:6.95px">仅影响层次</div>
<div style="position:absolute;left:694.6px;top:198px;width:80px;height:51.4px;background:transparent;border:1px solid #414141;"></div>
<div class="t" style="left:697px;top:190.5px;font-size:6.95px;color:#e4e4e4;line-height:12px;height:12px;background:#4e4e4e;padding:0 1.4px 0 0.6px;">对齐<span class="l">:</span></div>
<div class="btn " style="left:701.8px;top:205.6px;width:64.2px;height:9.4px;line-height:9.4px;font-size:6.95px">居中到对象</div>
<div class="btn " style="left:701.8px;top:220.6px;width:64.2px;height:9.4px;line-height:9.4px;font-size:6.95px">对齐到对象</div>
<div class="btn " style="left:701.8px;top:235.6px;width:64.2px;height:9.4px;line-height:9.4px;font-size:6.95px">对齐到世界</div>
<div style="position:absolute;left:694.6px;top:257.8px;width:80px;height:22.4px;background:transparent;border:1px solid #414141;"></div>
<div class="t" style="left:697px;top:249.7px;font-size:6.95px;color:#e4e4e4;line-height:12px;height:12px;background:#4e4e4e;padding:0 1.4px 0 0.6px;">轴<span class="l">:</span></div>
<div class="btn " style="left:701.8px;top:264px;width:64.2px;height:9.4px;line-height:9.4px;font-size:6.95px">重置轴</div>
<div style="position:absolute;left:685.4px;top:288.4px;width:96.4px;height:113.4px;background:#4e4e4e;"></div>
<svg style="position:absolute;left:690px;top:292.5px;overflow:visible;" width="4" height="3" viewBox="0 0 4 3"><path d="M0 0H3.8L1.9 2.6Z" fill="#dcdcdc"/></svg>
<div class="t" style="left:697.8px;top:288.1px;font-size:7.05px;color:#f2f2f2;line-height:12px;height:12px;font-weight:bold;">工作轴</div>
<svg style="position:absolute;left:773.4px;top:292.3px;overflow:visible;" width="5" height="5" viewBox="0 0 5 5"><path d="M0.5 0.5H4.5M0.5 2.5H4.5M0.5 4.5H4.5" stroke="#5c5c5c" stroke-width="0.9" stroke-dasharray="1 0.8"/></svg>
<div class="btn " style="left:701px;top:306.6px;width:64px;height:9.6px;line-height:9.6px;font-size:6.95px">编辑工作轴</div>
<div class="btn " style="left:701px;top:321px;width:47px;height:9.6px;line-height:9.6px;font-size:6.95px">使用工作轴</div>
<div class="btn " style="left:751.4px;top:321px;width:13.6px;height:9.6px;line-height:9.6px;font-size:6.95px"><span class="l">...</span></div>
<div class="btn dis" style="left:701px;top:336px;width:39px;height:9.4px;line-height:9.4px;font-size:6.95px">对齐到视图</div>
<div class="btn dis" style="left:743px;top:336px;width:22px;height:9.4px;line-height:9.4px;font-size:6.95px">重置</div>
<div style="position:absolute;left:701px;top:354.4px;width:64px;height:32.8px;background:transparent;border:1px solid #414141;"></div>
<div class="t" style="left:703.4px;top:347px;font-size:6.95px;color:#e4e4e4;line-height:12px;height:12px;background:#4e4e4e;padding:0 1.4px 0 0.6px;">把轴放置在<span class="l">:</span></div>
<div class="btn dis" style="left:704.6px;top:362px;width:23px;height:9.4px;line-height:9.4px;font-size:6.95px">视图</div>
<div class="btn dis" style="left:736px;top:362px;width:25px;height:9.4px;line-height:9.4px;font-size:6.95px">曲面</div>
<div class="t" style="left:710.4px;top:373.6px;font-size:5.6px;color:#eee;line-height:12px;height:12px;">✔</div>
<div class="t" style="left:717px;top:373.6px;font-size:6.95px;color:#e4e4e4;line-height:12px;height:12px;">对齐到视图</div>
<div style="position:absolute;left:703.4px;top:391.6px;width:4.6px;height:4.6px;background:#5c5c5c;"></div>
<div class="t" style="left:709.4px;top:388px;font-size:6.95px;color:#e4e4e4;line-height:12px;height:12px;">固定工作轴</div>
<div style="position:absolute;left:786.6px;top:86.6px;width:93.2px;height:93.2px;background:#4e4e4e;"></div>
<svg style="position:absolute;left:791.2px;top:90.2px;overflow:visible;" width="4" height="3" viewBox="0 0 4 3"><path d="M0 0H3.8L1.9 2.6Z" fill="#dcdcdc"/></svg>
<div class="t" style="left:799px;top:85.8px;font-size:7.05px;color:#f2f2f2;line-height:12px;height:12px;font-weight:bold;">调整变换</div>
<svg style="position:absolute;left:871.6px;top:90px;overflow:visible;" width="5" height="5" viewBox="0 0 5 5"><path d="M0.5 0.5H4.5M0.5 2.5H4.5M0.5 4.5H4.5" stroke="#5c5c5c" stroke-width="0.9" stroke-dasharray="1 0.8"/></svg>
<div style="position:absolute;left:794.2px;top:105.2px;width:79.8px;height:23px;background:transparent;border:1px solid #414141;"></div>
<div class="t" style="left:797.2px;top:97.4px;font-size:6.95px;color:#e4e4e4;line-height:12px;height:12px;background:#4e4e4e;padding:0 1.4px 0 0.6px;">移动<span class="l">/</span>旋转<span class="l">/</span>缩放<span class="l">:</span></div>
<div class="btn " style="left:800.2px;top:111.6px;width:68.2px;height:9.5px;line-height:9.5px;font-size:6.95px">不影响子对象</div>
<div style="position:absolute;left:794.2px;top:136.5px;width:79.8px;height:35.4px;background:transparent;border:1px solid #414141;"></div>
<div class="t" style="left:797.2px;top:128px;font-size:6.95px;color:#e4e4e4;line-height:12px;height:12px;background:#4e4e4e;padding:0 1.4px 0 0.6px;">重置<span class="l">:</span></div>
<div class="btn " style="left:800.2px;top:144.8px;width:68.2px;height:9.4px;line-height:9.4px;font-size:6.95px">变换</div>
<div class="btn " style="left:800.2px;top:159.6px;width:68.2px;height:9.4px;line-height:9.4px;font-size:6.95px">缩放</div>
<div style="position:absolute;left:786.6px;top:183.6px;width:93.4px;height:77.6px;background:#4e4e4e;"></div>
<svg style="position:absolute;left:791.2px;top:187.2px;overflow:visible;" width="4" height="3" viewBox="0 0 4 3"><path d="M0 0H3.8L1.9 2.6Z" fill="#dcdcdc"/></svg>
<div class="t" style="left:799px;top:182.8px;font-size:7.05px;color:#f2f2f2;line-height:12px;height:12px;font-weight:bold;">蒙皮姿势</div>
<svg style="position:absolute;left:871.6px;top:187px;overflow:visible;" width="5" height="5" viewBox="0 0 5 5"><path d="M0.5 0.5H4.5M0.5 2.5H4.5M0.5 4.5H4.5" stroke="#5c5c5c" stroke-width="0.9" stroke-dasharray="1 0.8"/></svg>
<div style="position:absolute;left:802.2px;top:202px;width:4.6px;height:4.6px;background:#565656;"></div>
<div class="t" style="left:809.2px;top:198.3px;font-size:6.8px;color:#7a7a7a;line-height:12px;height:12px;">蒙皮姿势模式</div>
<div style="position:absolute;left:794.2px;top:216.2px;width:78.8px;height:40.4px;background:transparent;border:1px solid #414141;"></div>
<div class="t" style="left:797.2px;top:209px;font-size:6.95px;color:#e4e4e4;line-height:12px;height:12px;background:#4e4e4e;padding:0 1.4px 0 0.6px;">启用<span class="l">:</span></div>
<div class="t" style="left:801.6px;top:220.4px;font-size:5.6px;color:#eee;line-height:12px;height:12px;">✔</div>
<div class="t" style="left:808.4px;top:220.4px;font-size:6.95px;color:#e4e4e4;line-height:12px;height:12px;">位置</div>
<div class="t" style="left:801.6px;top:232px;font-size:5.6px;color:#eee;line-height:12px;height:12px;">✔</div>
<div class="t" style="left:808.4px;top:232px;font-size:6.95px;color:#e4e4e4;line-height:12px;height:12px;">旋转</div>
<div class="t" style="left:801.6px;top:243.4px;font-size:5.6px;color:#eee;line-height:12px;height:12px;">✔</div>
<div class="t" style="left:808.4px;top:243.4px;font-size:6.95px;color:#e4e4e4;line-height:12px;height:12px;">缩放</div>
<div style="position:absolute;left:883.6px;top:86px;width:0.8px;height:380px;background:#3a3a3a;"></div>
<div style="position:absolute;left:884.4px;top:86px;width:4.6px;height:380px;background:#484848;"></div>
<div style="position:absolute;left:783.6px;top:120px;width:0.9px;height:346px;background:#3c3c3c;"></div>
<div style="position:absolute;left:0px;top:467.6px;width:684px;height:32.4px;background:linear-gradient(#4b4b4b,#454545 50%,#414141);"></div>
<div style="position:absolute;left:3.2px;top:470.2px;width:57px;height:13.6px;background:#e9c9cd;border:0.6px solid #ddd;"></div>
<div style="position:absolute;left:3.2px;top:483.8px;width:57px;height:13.6px;background:#ffffff;border:0.6px solid #bbb;"></div>
<div class="t" style="left:6.2px;top:483.2px;font-size:6.8px;color:#9a9a9a;line-height:12px;height:12px;font-family:'Liberation Mono','Noto Sans CJK SC',monospace;letter-spacing:0.1px;">MAXScript 迷</div>
<div class="t" style="left:64.8px;top:471.6px;font-size:6.95px;color:#e8e8e8;line-height:12px;height:12px;">选择了<span class="l"> 1 </span>个<span class="l"> </span>对象</div>
<div class="t" style="left:64.8px;top:486px;font-size:6.95px;color:#e8e8e8;line-height:12px;height:12px;">单击并拖动以选择并移动对象</div>
<svg style="position:absolute;left:354.6px;top:473.2px;overflow:visible;" width="9" height="9" viewBox="0 0 9 9"><rect x="2.2" y="2.2" width="4.6" height="4.6" fill="#4fb0aa"/><path d="M0.4 2.2V0.4H2.2M6.8 0.4H8.6V2.2M8.6 6.8V8.6H6.8M2.2 8.6H0.4V6.8" stroke="#78b4b0" stroke-width="0.7" fill="none"/></svg>
<svg style="position:absolute;left:371px;top:472.6px;overflow:visible;" width="6.4" height="9.6" viewBox="0 0 6.4 9.6"><path d="M1.4 4.4V2.8Q1.4 0.6 3.2 0.6Q5 0.6 5 2.8V4.4" stroke="#e8e8e8" stroke-width="1" fill="none"/><rect x="0.2" y="4.2" width="6" height="5" rx="0.6" fill="#e8e8e8"/><rect x="2.7" y="5.6" width="1" height="2" fill="#444"/></svg>
<svg style="position:absolute;left:385px;top:473px;overflow:visible;" width="8.4" height="9" viewBox="0 0 8.4 9"><rect x="0.3" y="0.3" width="7.8" height="8.4" fill="#e0e0e0"/><rect x="1.4" y="1.6" width="2" height="2" fill="#333"/><rect x="4.8" y="1.6" width="2" height="2" fill="#333"/><rect x="3.1" y="3.6" width="2" height="2" fill="#333"/><rect x="1.4" y="5.6" width="2" height="2" fill="#333"/><rect x="4.8" y="5.6" width="2" height="2" fill="#333"/></svg>
<div class="t" style="left:398px;top:471.6px;font-size:7.4px;color:#d8d8d8;line-height:12px;height:12px;"><span class="l">X:</span></div>
<div style="position:absolute;left:407px;top:473px;width:38.4px;height:9.2px;background:#5c5c5c;"></div>
<div class="t" style="left:408.6px;top:471.6px;font-size:7.4px;color:#c4c4c4;line-height:12px;height:12px;"><span class="l">-2477.55</span></div>
<svg style="position:absolute;left:441.8px;top:474.4px;overflow:visible;" width="3" height="6.6" viewBox="0 0 3 6.6"><path d="M0 2.6L1.4 0.2L2.8 2.6ZM0 4L1.4 6.4L2.8 4Z" fill="#e4e4e4"/></svg>
<div class="t" style="left:447.6px;top:471.6px;font-size:7.4px;color:#d8d8d8;line-height:12px;height:12px;"><span class="l">Y:</span></div>
<div style="position:absolute;left:456.2px;top:473px;width:38.6px;height:9.2px;background:#5c5c5c;"></div>
<div class="t" style="left:457.8px;top:471.6px;font-size:7.4px;color:#c4c4c4;line-height:12px;height:12px;"><span class="l">3959.585</span></div>
<svg style="position:absolute;left:491.2px;top:474.4px;overflow:visible;" width="3" height="6.6" viewBox="0 0 3 6.6"><path d="M0 2.6L1.4 0.2L2.8 2.6ZM0 4L1.4 6.4L2.8 4Z" fill="#e4e4e4"/></svg>
<div class="t" style="left:497px;top:471.6px;font-size:7.4px;color:#d8d8d8;line-height:12px;height:12px;"><span class="l">Z:</span></div>
<div style="position:absolute;left:505.4px;top:473px;width:38.4px;height:9.2px;background:#5c5c5c;"></div>
<div class="t" style="left:507px;top:471.6px;font-size:7.4px;color:#c4c4c4;line-height:12px;height:12px;"><span class="l">817.483m</span></div>
<svg style="position:absolute;left:540.2px;top:474.4px;overflow:visible;" width="3" height="6.6" viewBox="0 0 3 6.6"><path d="M0 2.6L1.4 0.2L2.8 2.6ZM0 4L1.4 6.4L2.8 4Z" fill="#e4e4e4"/></svg>
<div class="t" style="left:547px;top:471.6px;font-size:7.2px;color:#e4e4e4;line-height:12px;height:12px;">栅格<span class="l"> = 10.0mm</span></div>
<div style="position:absolute;left:532.8px;top:485.6px;width:12.4px;height:11.8px;background:#5b8fd8;border-radius:1px;"></div>
<svg style="position:absolute;left:535px;top:487.6px;overflow:visible;" width="8" height="8" viewBox="0 0 8 8"><path d="M1 2.4L4 1L7 2.4V6L4 7.4L1 6ZM1 2.4L4 3.8L7 2.4M4 3.8V7.4" stroke="#cfe0f4" stroke-width="0.7" fill="none"/></svg>
<div class="t" style="left:547.6px;top:486px;font-size:6.4px;color:#e4e4e4;line-height:12px;height:12px;">添加时间标记</div>
<svg style="position:absolute;left:610.4px;top:473px;overflow:visible;" width="9.2" height="8.2" viewBox="0 0 9.2 8.2"><rect x="0" y="0.4" width="1.3" height="7.4" fill="#ececec"/><path d="M5.2 0.8V7.4L1.6 4.1ZM9 0.8V7.4L5.4 4.1Z" fill="#ececec"/></svg>
<svg style="position:absolute;left:625.2px;top:473px;overflow:visible;" width="8.8" height="8.2" viewBox="0 0 8.8 8.2"><path d="M4 0.8V7.4L0 4.1Z" fill="#ececec"/><rect x="5" y="0.6" width="1.4" height="7" fill="#ececec"/><rect x="7.2" y="0.6" width="1.4" height="7" fill="#ececec"/></svg>
<svg style="position:absolute;left:638.8px;top:471.6px;overflow:visible;" width="10" height="11.4" viewBox="0 0 10 11.4"><path d="M0 0.4V10L7.4 5.2Z" fill="#ececec"/><path d="M9.8 8.6V10.8H7.6Z" fill="#ececec"/></svg>
<svg style="position:absolute;left:650.8px;top:473px;overflow:visible;" width="8.8" height="8.2" viewBox="0 0 8.8 8.2"><rect x="0" y="0.6" width="1.4" height="7" fill="#ececec"/><rect x="2.2" y="0.6" width="1.4" height="7" fill="#ececec"/><path d="M4.8 0.8V7.4L8.8 4.1Z" fill="#ececec"/></svg>
<svg style="position:absolute;left:665px;top:473px;overflow:visible;" width="9.2" height="8.2" viewBox="0 0 9.2 8.2"><path d="M0 0.8V7.4L3.6 4.1ZM3.8 0.8V7.4L7.4 4.1Z" fill="#ececec"/><rect x="7.8" y="0.4" width="1.3" height="7.4" fill="#ececec"/></svg>
<svg style="position:absolute;left:611px;top:486.2px;overflow:visible;" width="8" height="6" viewBox="0 0 8 6"><path d="M3.2 0.2V5.8L0 3ZM4.6 0.2V5.8L7.8 3Z" fill="#ececec"/></svg>
<div style="position:absolute;left:623px;top:484.8px;width:39.6px;height:9px;background:#5c5c5c;"></div>
<div class="t" style="left:625px;top:483.4px;font-size:7.2px;color:#c8c8c8;line-height:12px;height:12px;"><span class="l">0</span></div>
<svg style="position:absolute;left:658.4px;top:486px;overflow:visible;" width="3" height="6.6" viewBox="0 0 3 6.6"><path d="M0 2.6L1.4 0.2L2.8 2.6ZM0 4L1.4 6.4L2.8 4Z" fill="#e4e4e4"/></svg>
<svg style="position:absolute;left:666.8px;top:485px;overflow:visible;" width="9" height="9.4" viewBox="0 0 9 9.4"><circle cx="3.8" cy="3.8" r="3.4" fill="#e0e0e0"/><path d="M3.8 1.4V3.8L5.4 4.8" stroke="#555" stroke-width="0.7" fill="none"/><circle cx="6.2" cy="6.6" r="2" fill="none" stroke="#e0b030" stroke-width="1.1"/></svg>
<div style="position:absolute;left:684.2px;top:471.4px;width:23.4px;height:24.2px;background:#5e5e5e;"></div>
<svg style="position:absolute;left:688.4px;top:474px;overflow:visible;" width="17" height="19" viewBox="0 0 17 19"><path d="M7.4 0.6V14.6M0.4 7.6H14.4" stroke="#f4f4f4" stroke-width="2.6" fill="none"/><path d="M9.6 10.4H16V12.6L13.6 17.4H11.8L13 12.8H9.6Z" fill="#3aa8a0"/></svg>
<div class="btn " style="left:709.4px;top:471.6px;width:37.4px;height:10.4px;line-height:10.4px;font-size:6.95px">自动</div>
<div class="btn " style="left:709.4px;top:484.2px;width:37.4px;height:10.8px;line-height:10.8px;font-size:6.6px">设置关键点</div>
<div style="position:absolute;left:749.6px;top:471.4px;width:60px;height:9px;background:#5e5e5e;"></div>
<div class="t" style="left:753.4px;top:470px;font-size:6.8px;color:#e8e8e8;line-height:12px;height:12px;">选定对象</div>
<svg style="position:absolute;left:751px;top:485px;overflow:visible;" width="11" height="10" viewBox="0 0 11 10"><path d="M3.4 0.6V3M6.8 0.6V3M0.6 3.2H9.6M3 3.4Q3 7 0.8 9M7.2 3.4Q7.4 7 9.6 8.6" stroke="#3fb0a8" stroke-width="1" fill="none"/><path d="M10.8 8V10H8.8Z" fill="#ddd"/></svg>
<div class="btn " style="left:764.4px;top:484.8px;width:48.6px;height:10.2px;line-height:10.2px;font-size:6.8px">过滤器<span class="l">...</span></div>
<svg style="position:absolute;left:837px;top:472px;overflow:visible;" width="8.4" height="9" viewBox="0 0 8.4 9"><circle cx="5.4" cy="3.2" r="2.6" fill="none" stroke="#3fb0a8" stroke-width="1"/><path d="M3.4 5.2L0.6 8.4" stroke="#e8e8e8" stroke-width="1.4"/></svg>
<svg style="position:absolute;left:850.4px;top:472px;overflow:visible;" width="8.4" height="9" viewBox="0 0 8.4 9"><circle cx="4" cy="4" r="3" fill="none" stroke="#3fb0a8" stroke-width="1.3"/><path d="M2.4 3.2L4 5.4L5.6 3.2" stroke="#3fb0a8" stroke-width="1" fill="none"/></svg>
<div style="position:absolute;left:859px;top:481.4px;width:1.6px;height:1.6px;background:#e6e6e6;"></div>
<svg style="position:absolute;left:864px;top:472px;overflow:visible;" width="8" height="9" viewBox="0 0 8 9"><path d="M5.6 0.8L1 4.4L5.6 8" stroke="#e8e8e8" stroke-width="1.3" fill="none"/><path d="M7.4 2L4.2 4.4L7.4 7" stroke="#3fb0a8" stroke-width="1" fill="none"/></svg>
<div style="position:absolute;left:872px;top:481.4px;width:1.6px;height:1.6px;background:#e6e6e6;"></div>
<svg style="position:absolute;left:823.6px;top:487.6px;overflow:visible;" width="8.4" height="6.4" viewBox="0 0 8.4 6.4"><path d="M0.4 5.6L3 1.4M3.4 0.8L7.6 3.2L3.6 5.8" stroke="#3fb0a8" stroke-width="1" fill="none"/></svg>
<svg style="position:absolute;left:837.4px;top:485.4px;overflow:visible;" width="8" height="8" viewBox="0 0 8 8"><path d="M1 4.4L0.2 3Q0.6 2.2 1.6 2.8L2.2 3.6V1.2Q2.8 0.4 3.4 1.2V0.6Q4.2 0 4.8 0.8V1.2Q5.6 0.6 6.2 1.4V2Q7 1.6 7.4 2.4V5.2Q7 7.4 5 7.6H3.6Q2 7.2 1 4.4Z" fill="#e8e8e8"/></svg>
<div style="position:absolute;left:846px;top:493.4px;width:1.6px;height:1.6px;background:#e6e6e6;"></div>
<svg style="position:absolute;left:850.4px;top:485.6px;overflow:visible;" width="7.4" height="7.4" viewBox="0 0 7.4 7.4"><circle cx="3.6" cy="3.6" r="2.8" fill="none" stroke="#3fb0a8" stroke-width="1.2"/><path d="M0.4 5.4Q3.6 4.4 6.8 1.4" stroke="#e8e8e8" stroke-width="1" fill="none"/></svg>
<div style="position:absolute;left:859px;top:493.4px;width:1.6px;height:1.6px;background:#e6e6e6;"></div>
<svg style="position:absolute;left:863.8px;top:485.8px;overflow:visible;" width="7.4" height="7.2" viewBox="0 0 7.4 7.2"><rect x="0.4" y="0.4" width="6.6" height="6.4" fill="none" stroke="#e8e8e8" stroke-width="0.8"/><rect x="0.4" y="0.4" width="3" height="3" fill="#e8e8e8"/><rect x="3.8" y="3.6" width="3.2" height="3.2" fill="#e8e8e8"/></svg>
<svg style="position:absolute;left:882px;top:492px;overflow:visible;" width="6" height="6" viewBox="0 0 6 6"><path d="M5.6 0.6L0.6 5.6M5.6 2.6L2.6 5.6M5.6 4.4L4.4 5.6" stroke="#8a98a8" stroke-width="0.8"/></svg>
<div style="position:absolute;left:683px;top:101.4px;width:35.4px;height:17.4px;background:transparent;border:2.4px solid #dc1420;"></div>
<div style="position:absolute;left:697px;top:143px;width:71.4px;height:17.2px;background:transparent;border:2.4px solid #dc1420;"></div>
<div style="position:absolute;left:705.6px;top:202.4px;width:56.4px;height:15.4px;background:transparent;border:2.4px solid #dc1420;"></div>
<div class="t" style="left:624.6px;top:92px;font-size:14.6px;line-height:18px;height:18px;color:#d4202c;font-weight:500;font-family:'Noto Sans CJK SC',sans-serif">层次</div>
<svg style="position:absolute;left:0px;top:0px;overflow:visible;" width="889" height="500" viewBox="0 0 889 500"><path d="M670.6 101.8 L702.2 85.6 L699.2 82.4 L721 79.2 L709.2 88.8 L705.4 88 L671.4 102.8 Z" fill="#e01822"/></svg>
<div class="t" style="left:811.6px;top:6.4px;font-size:22px;line-height:26px;height:26px;letter-spacing:0.5px;font-family:'Noto Sans CJK SC',sans-serif;font-weight:700;color:transparent;-webkit-text-stroke:0.6px rgba(218,218,218,0.9)">虎课网</div>
<svg style="position:absolute;left:782px;top:8px;overflow:visible;" width="29" height="23" viewBox="0 0 29 23"><path d="M1 9Q4 3 12 4.4Q16 0.6 22 3.4Q27 6 27.4 12M3 12Q2 19 9 21.4Q17 23 23 19.6Q27 16.6 27.4 12M6 10.4Q9 7.4 13 9.6M16.4 9.6Q20 7.4 23.4 10.4M9 15Q14.6 19.4 20.6 15M14.6 11V15.6" stroke="rgba(218,218,218,0.9)" stroke-width="0.7" fill="none"/></svg>
<div style="position:absolute;left:787px;top:453.6px;width:44.4px;height:35.4px;background:#616161;border-radius:4px;"></div>
<div style="position:absolute;left:791.4px;top:458px;width:35.8px;height:21.6px;background:#4a4a4a;"></div>
<div class="t" style="left:794.6px;top:458.4px;font-size:17px;line-height:18px;height:18px;font-family:'Liberation Sans',sans-serif;font-weight:bold;color:#626262;letter-spacing:-0.4px">AI</div>
<svg style="position:absolute;left:791.4px;top:470px;overflow:visible;" width="35.8" height="14" viewBox="0 0 35.8 14"><path d="M0 5.2Q3 3.6 5.6 4.6Q9 2.4 12.6 4.4Q16 4.8 18 5.6Q20.6 0.6 24.4 0.6Q28 0.8 30.4 4.6Q33.6 5 35.8 7V14H0Z" fill="#616161"/><circle cx="16.4" cy="6.6" r="1.1" fill="#f0f0f0"/></svg>
<div class="t" style="left:836.4px;top:462.6px;font-size:14.6px;line-height:17px;height:17px;font-family:'Noto Sans CJK SC',sans-serif;font-weight:bold;color:#676767">树叶云</div>
<div style="position:absolute;left:0px;top:18px;width:1.4px;height:482px;background:#1b2c40;"></div>
<div style="position:absolute;left:1.4px;top:62.4px;width:0.9px;height:405px;background:#8fa4ae;"></div>
<div style="position:absolute;left:0px;top:497.6px;width:889px;height:2.4px;background:#31445c;"></div>
</div>
</body>
</html>
